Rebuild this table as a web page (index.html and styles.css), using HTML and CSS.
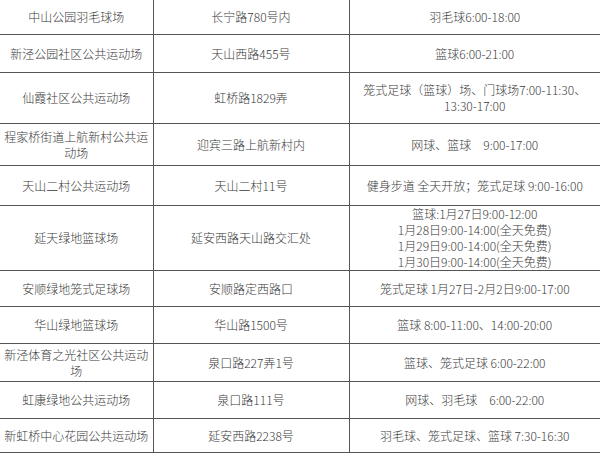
FILE: index.html
```html
<!DOCTYPE html>
<html lang="zh-CN">
<head>
<meta charset="utf-8">
<title>公共运动场开放时间</title>
<link rel="stylesheet" href="styles.css">
</head>
<body>
<table class="venues">
  <colgroup>
    <col class="c-name">
    <col class="c-addr">
    <col class="c-time">
  </colgroup>
  <tbody>
    <tr class="r1"><td>中山公园羽毛球场</td><td>长宁路780号内</td><td>羽毛球6:00-18:00</td></tr>
    <tr class="r2"><td>新泾公园社区公共运动场</td><td>天山西路455号</td><td>篮球6:00-21:00</td></tr>
    <tr class="r3"><td>仙霞社区公共运动场</td><td>虹桥路1829弄</td><td>笼式足球（篮球）场、门球场7:00-11:30、13:30-17:00</td></tr>
    <tr class="r4"><td>程家桥街道上航新村公共运动场</td><td>迎宾三路上航新村内</td><td>网球、篮球&emsp;9:00-17:00</td></tr>
    <tr class="r5"><td>天山二村公共运动场</td><td>天山二村11号</td><td>健身步道 全天开放；笼式足球 9:00-16:00</td></tr>
    <tr class="r6"><td>延天绿地篮球场</td><td>延安西路天山路交汇处</td><td class="top">篮球:1月27日9:00-12:00<br>1月28日9:00-14:00(全天免费)<br>1月29日9:00-14:00(全天免费)<br>1月30日9:00-14:00(全天免费)</td></tr>
    <tr class="r7"><td>安顺绿地笼式足球场</td><td>安顺路定西路口</td><td>笼式足球 1月27日-2月2日9:00-17:00</td></tr>
    <tr class="r8"><td>华山绿地篮球场</td><td>华山路1500号</td><td>篮球 8:00-11:00、14:00-20:00</td></tr>
    <tr class="r9"><td>新泾体育之光社区公共运动场</td><td>泉口路227弄1号</td><td>篮球、笼式足球 6:00-22:00</td></tr>
    <tr class="r10"><td>虹康绿地公共运动场</td><td>泉口路111号</td><td>网球、羽毛球&emsp;6:00-22:00</td></tr>
    <tr class="r11"><td>新虹桥中心花园公共运动场</td><td>延安西路2238号</td><td>羽毛球、笼式足球、篮球 7:30-16:30</td></tr>
  </tbody>
</table>
</body>
</html>
```

FILE: styles.css
```css
html, body {
  margin: 0;
  padding: 0;
  background: #ffffff;
}

.venues {
  width: 600px;
  border-collapse: collapse;
  table-layout: fixed;
  font-family: "Noto Sans CJK SC", "Noto Sans", sans-serif;
  font-size: 12px;
  line-height: 16px;
  color: #3a3a3a;
}

.c-name { width: 153px; }
.c-addr { width: 196px; }
.c-time { width: 251px; }

.venues td {
  padding: 0 3px;
  text-align: center;
  vertical-align: middle;
  border-bottom: 1px solid #555555;
  border-left: 1px solid #555555;
  font-weight: 300;
}

.venues td:first-child {
  border-left: none;
}

.venues td.top {
  vertical-align: top;
  padding-top: 0;
}

.r1 td { height: 34px; }
.r2 td { height: 37px; }
.r3 td { height: 50px; }
.r4 td { height: 41px; }
.r5 td { height: 39px; }
.r6 td { height: 64px; }
.r7 td { height: 35px; }
.r8 td { height: 36px; }
.r9 td { height: 37px; }
.r10 td { height: 36px; }
.r11 td { height: 33px; }
```
